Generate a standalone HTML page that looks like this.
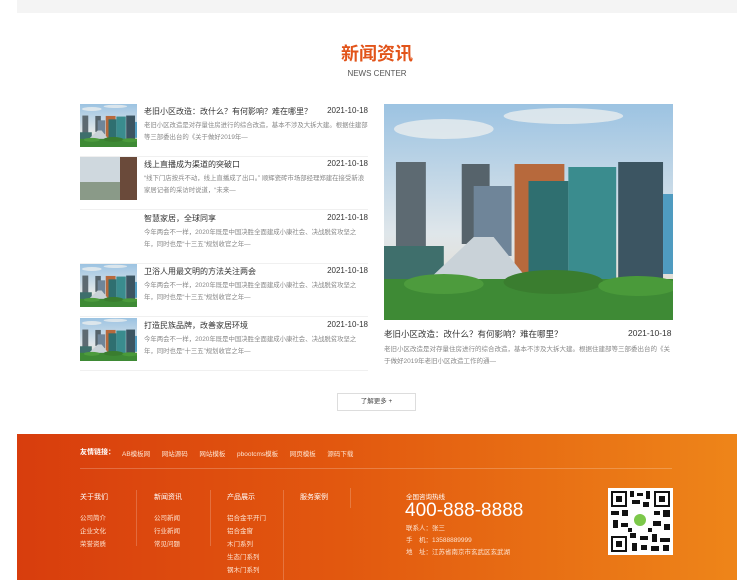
<!DOCTYPE html>
<html><head><meta charset="utf-8">
<style>
*{margin:0;padding:0;box-sizing:border-box}
body{width:754px;height:580px;background:#fff;position:relative;overflow:hidden;font-family:"Liberation Sans","Noto Sans CJK SC",sans-serif}
.a{position:absolute;white-space:nowrap}
.topbar{left:17px;top:0;width:720px;height:13px;background:#f4f4f4}
.h1{left:0;width:754px;top:40px;text-align:center;font-size:18px;font-weight:bold;color:#e2541a;letter-spacing:0px}
.h2{left:0;width:754px;top:69px;text-align:center;font-size:8px;color:#555}
.item{position:absolute;left:80px;width:288px;height:53px;border-bottom:1px solid #f0f0f0}
.item svg{position:absolute;left:0;top:0}
.item .t{position:absolute;left:64px;top:2px;font-size:8px;color:#333}
.item .d{position:absolute;right:0;top:2px;font-size:8px;color:#333}
.item .p{position:absolute;left:64px;top:16px;width:224px;font-size:6.4px;line-height:12px;color:#888;white-space:normal}
.foot{left:17px;top:434px;width:720px;height:146px;background:linear-gradient(90deg,#d83d0d 0%,#e2580f 45%,#ee8519 100%)}
.f{color:#fde3d0;font-size:6.5px}
.fh{color:#fff;font-size:7px}
.sep{position:absolute;width:1px;background:rgba(255,255,255,.2)}
</style></head><body>
<svg width="0" height="0" style="position:absolute">
<defs>
<linearGradient id="sky" x1="0" y1="0" x2="0" y2="1"><stop offset="0" stop-color="#9cc3e2"/><stop offset=".6" stop-color="#dfe6ea"/><stop offset="1" stop-color="#e8d9c6"/></linearGradient>
<symbol id="city" viewBox="0 0 290 216" preserveAspectRatio="none">
<rect width="290" height="216" fill="url(#sky)"/>
<ellipse cx="60" cy="25" rx="50" ry="10" fill="#f2f2f0" opacity=".7"/>
<ellipse cx="180" cy="12" rx="60" ry="8" fill="#f2f2f0" opacity=".7"/>
<rect x="12" y="58" width="30" height="90" fill="#5d6a72"/>
<rect x="78" y="60" width="28" height="80" fill="#56636b"/>
<rect x="90" y="82" width="38" height="70" fill="#6f8599"/>
<rect x="131" y="60" width="50" height="110" fill="#b7693c"/>
<rect x="145" y="77" width="40" height="100" fill="#2f6f70"/>
<rect x="185" y="63" width="48" height="115" fill="#3a8c8e"/>
<rect x="235" y="58" width="45" height="120" fill="#3c5562"/>
<rect x="280" y="90" width="10" height="80" fill="#4f9bc0"/>
<rect x="0" y="142" width="60" height="40" fill="#3f6f6c"/>
<path d="M40 180 L90 133 L110 133 L148 180Z" fill="#c9d2d8"/>
<rect x="0" y="175" width="290" height="41" fill="#3e8a35"/>
<ellipse cx="60" cy="180" rx="40" ry="10" fill="#4d9b3d"/>
<ellipse cx="170" cy="178" rx="50" ry="12" fill="#3a7d2f"/>
<ellipse cx="255" cy="182" rx="40" ry="10" fill="#4a9a3a"/>
</symbol>
</defs></svg>

<div class="a topbar"></div>
<div class="a h1">新闻资讯</div>
<div class="a h2">NEWS CENTER</div>

<div class="item" style="top:104px"><svg width="57" height="43"><use href="#city"/></svg><div class="t">老旧小区改造：改什么？有何影响？难在哪里？</div><div class="d">2021-10-18</div><div class="p">老旧小区改造是对存量住房进行的综合改造，基本不涉及大拆大建。根据住建部等三部委出台的《关于做好2019年—</div></div>
<div class="item" style="top:157px"><svg width="57" height="43"><rect width="57" height="43" fill="#cfd8de"/><rect x="0" y="25" width="40" height="18" fill="#8a9a88"/><rect x="40" y="0" width="17" height="43" fill="#6a4a3a"/></svg><div class="t">线上直播成为渠道的突破口</div><div class="d">2021-10-18</div><div class="p">“线下门店按兵不动，线上直播成了出口。” 顺辉瓷砖市场部经理郑建在接受新浪家居记者的采访时说道，“未来—</div></div>
<div class="item" style="top:211px"><div class="t">智慧家居，全球同享</div><div class="d">2021-10-18</div><div class="p">今年两会不一样，2020年既是中国决胜全面建成小康社会、决战脱贫攻坚之年，同时也是“十三五”规划收官之年—</div></div>
<div class="item" style="top:264px"><svg width="57" height="43"><use href="#city"/></svg><div class="t">卫浴人用最文明的方法关注两会</div><div class="d">2021-10-18</div><div class="p">今年两会不一样，2020年既是中国决胜全面建成小康社会、决战脱贫攻坚之年，同时也是“十三五”规划收官之年—</div></div>
<div class="item" style="top:318px"><svg width="57" height="43"><use href="#city"/></svg><div class="t">打造民族品牌，改善家居环境</div><div class="d">2021-10-18</div><div class="p">今年两会不一样，2020年既是中国决胜全面建成小康社会、决战脱贫攻坚之年，同时也是“十三五”规划收官之年—</div></div>

<svg class="a" style="left:384px;top:104px" width="289" height="216"><use href="#city"/></svg>
<div class="a" style="left:384px;top:328px;font-size:8.5px;color:#333">老旧小区改造：改什么？有何影响？难在哪里？</div>
<div class="a" style="left:628px;top:328px;font-size:8.5px;color:#333">2021-10-18</div>
<div class="a" style="left:384px;top:344px;width:289px;white-space:normal;font-size:6.5px;line-height:12px;color:#888">老旧小区改造是对存量住房进行的综合改造，基本不涉及大拆大建。根据住建部等三部委出台的《关于做好2019年老旧小区改造工作的通—</div>

<div class="a" style="left:337px;top:393px;width:79px;height:18px;border:1px solid #ddd;font-size:6.5px;color:#444;text-align:center;line-height:16px">了解更多 +</div>

<div class="a foot"></div>
<div class="a fh" style="left:80px;top:447px;font-weight:bold">友情链接：</div>
<div class="a f" style="left:122px;top:448px;word-spacing:4px">AB模板网 &nbsp;网站源码 &nbsp;网站模板 &nbsp;pbootcms模板 &nbsp;网页模板 &nbsp;源码下载</div>
<div class="a" style="left:80px;top:468px;width:592px;height:1px;background:rgba(255,255,255,.22)"></div>

<div class="a fh" style="left:80px;top:492px">关于我们</div>
<div class="a f" style="left:80px;top:512px;line-height:13px">公司简介<br>企业文化<br>荣誉资质</div>
<div class="sep" style="left:136px;top:490px;height:56px"></div>
<div class="a fh" style="left:154px;top:492px">新闻资讯</div>
<div class="a f" style="left:154px;top:512px;line-height:13px">公司新闻<br>行业新闻<br>常见问题</div>
<div class="sep" style="left:210px;top:490px;height:56px"></div>
<div class="a fh" style="left:227px;top:492px">产品展示</div>
<div class="a f" style="left:227px;top:512px;line-height:13px">铝合金平开门<br>铝合金窗<br>木门系列<br>生态门系列<br>钢木门系列</div>
<div class="sep" style="left:283px;top:490px;height:90px"></div>
<div class="a fh" style="left:300px;top:492px">服务案例</div>
<div class="sep" style="left:350px;top:488px;height:20px"></div>

<div class="a fh" style="left:406px;top:491px;font-size:6.5px">全国咨询热线</div>
<div class="a" style="left:405px;top:500px;font-size:19px;color:#fff">400-888-8888</div>
<div class="a f" style="left:406px;top:523px;line-height:12px">联系人：张三<br>手　机：13588889999<br>地　址：江苏省南京市玄武区玄武湖</div>

<svg class="a" style="left:608px;top:488px" width="65" height="67" viewBox="0 0 65 67">
<rect width="65" height="67" fill="#fff"/>
<g fill="#111">
<rect x="3" y="3" width="16" height="16"/><rect x="46" y="3" width="16" height="16"/><rect x="3" y="48" width="16" height="16"/>
</g>
<g fill="#fff"><rect x="5" y="5" width="12" height="12"/><rect x="48" y="5" width="12" height="12"/><rect x="5" y="50" width="12" height="12"/></g>
<g fill="#111"><rect x="8" y="8" width="6" height="6"/><rect x="51" y="8" width="6" height="6"/><rect x="8" y="53" width="6" height="6"/>
<rect x="22" y="3" width="4" height="6"/><rect x="29" y="5" width="6" height="3"/><rect x="38" y="3" width="4" height="8"/><rect x="24" y="12" width="8" height="4"/><rect x="35" y="14" width="6" height="5"/>
<rect x="3" y="23" width="8" height="4"/><rect x="14" y="22" width="6" height="6"/><rect x="46" y="23" width="6" height="4"/><rect x="55" y="22" width="7" height="7"/>
<rect x="5" y="32" width="5" height="8"/><rect x="13" y="35" width="7" height="4"/><rect x="45" y="33" width="8" height="5"/><rect x="56" y="36" width="6" height="6"/>
<rect x="22" y="45" width="6" height="5"/><rect x="32" y="48" width="8" height="4"/><rect x="44" y="46" width="5" height="8"/><rect x="52" y="50" width="10" height="4"/>
<rect x="24" y="55" width="5" height="8"/><rect x="33" y="57" width="6" height="5"/><rect x="43" y="58" width="8" height="5"/><rect x="55" y="57" width="6" height="6"/>
<rect x="40" y="40" width="4" height="4"/><rect x="20" y="40" width="4" height="4"/></g>
<rect x="24" y="24" width="17" height="17" rx="8" fill="#fff"/><circle cx="32" cy="32" r="6" fill="#7cc84a"/>
</svg>
</body></html>
